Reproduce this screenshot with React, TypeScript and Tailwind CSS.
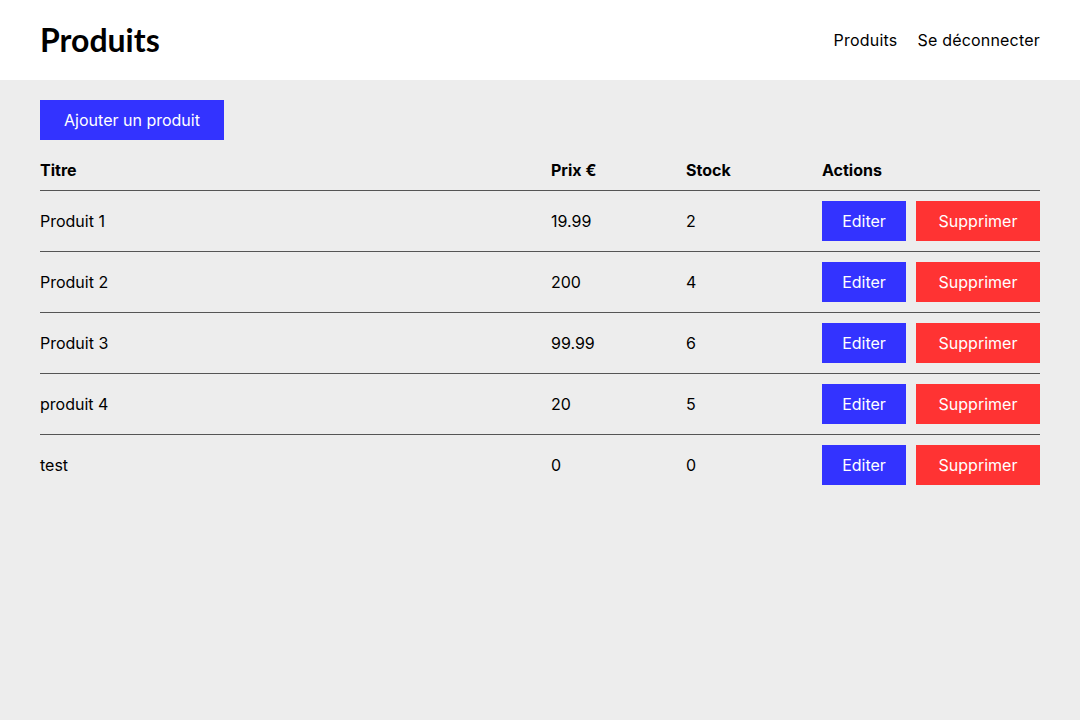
const products = [
  { title: "Produit 1", price: "19.99", stock: 2 },
  { title: "Produit 2", price: "200", stock: 4 },
  { title: "Produit 3", price: "99.99", stock: 6 },
  { title: "produit 4", price: "20", stock: 5 },
  { title: "test", price: "0", stock: 0 },
];

const cols = "grid grid-cols-[511px_135px_136px_218px] items-center";

export default function App() {
  return (
    <div className="min-h-screen bg-[#ededed] font-['Inter',sans-serif] text-black">
      <header className="flex h-20 items-center justify-between bg-white px-10">
        <h1 className="font-['Lato',sans-serif] text-[32px] font-bold">Produits</h1>
        <nav className="flex gap-5 text-base tracking-[0.2px]">
          <a href="#">Produits</a>
          <a href="#">Se déconnecter</a>
        </nav>
      </header>
      <main className="px-10 pt-5">
        <button className="h-10 w-[184px] bg-[#3333ff] text-base text-white">
          Ajouter un produit
        </button>
        <div className="mt-2.5">
          <div className={`${cols} border-b border-[#555] py-2.5 font-bold leading-5`}>
            <div>Titre</div>
            <div>Prix €</div>
            <div>Stock</div>
            <div>Actions</div>
          </div>
          {products.map((p, i) => (
            <div
              key={p.title}
              className={`${cols} py-2.5 ${i < products.length - 1 ? "border-b border-[#555]" : ""}`}
            >
              <div>{p.title}</div>
              <div>{p.price}</div>
              <div>{p.stock}</div>
              <div className="flex gap-2.5">
                <button className="h-10 w-[84px] bg-[#3333ff] text-white">Editer</button>
                <button className="h-10 w-[124px] bg-[#ff3333] text-white">Supprimer</button>
              </div>
            </div>
          ))}
        </div>
      </main>
    </div>
  );
}
